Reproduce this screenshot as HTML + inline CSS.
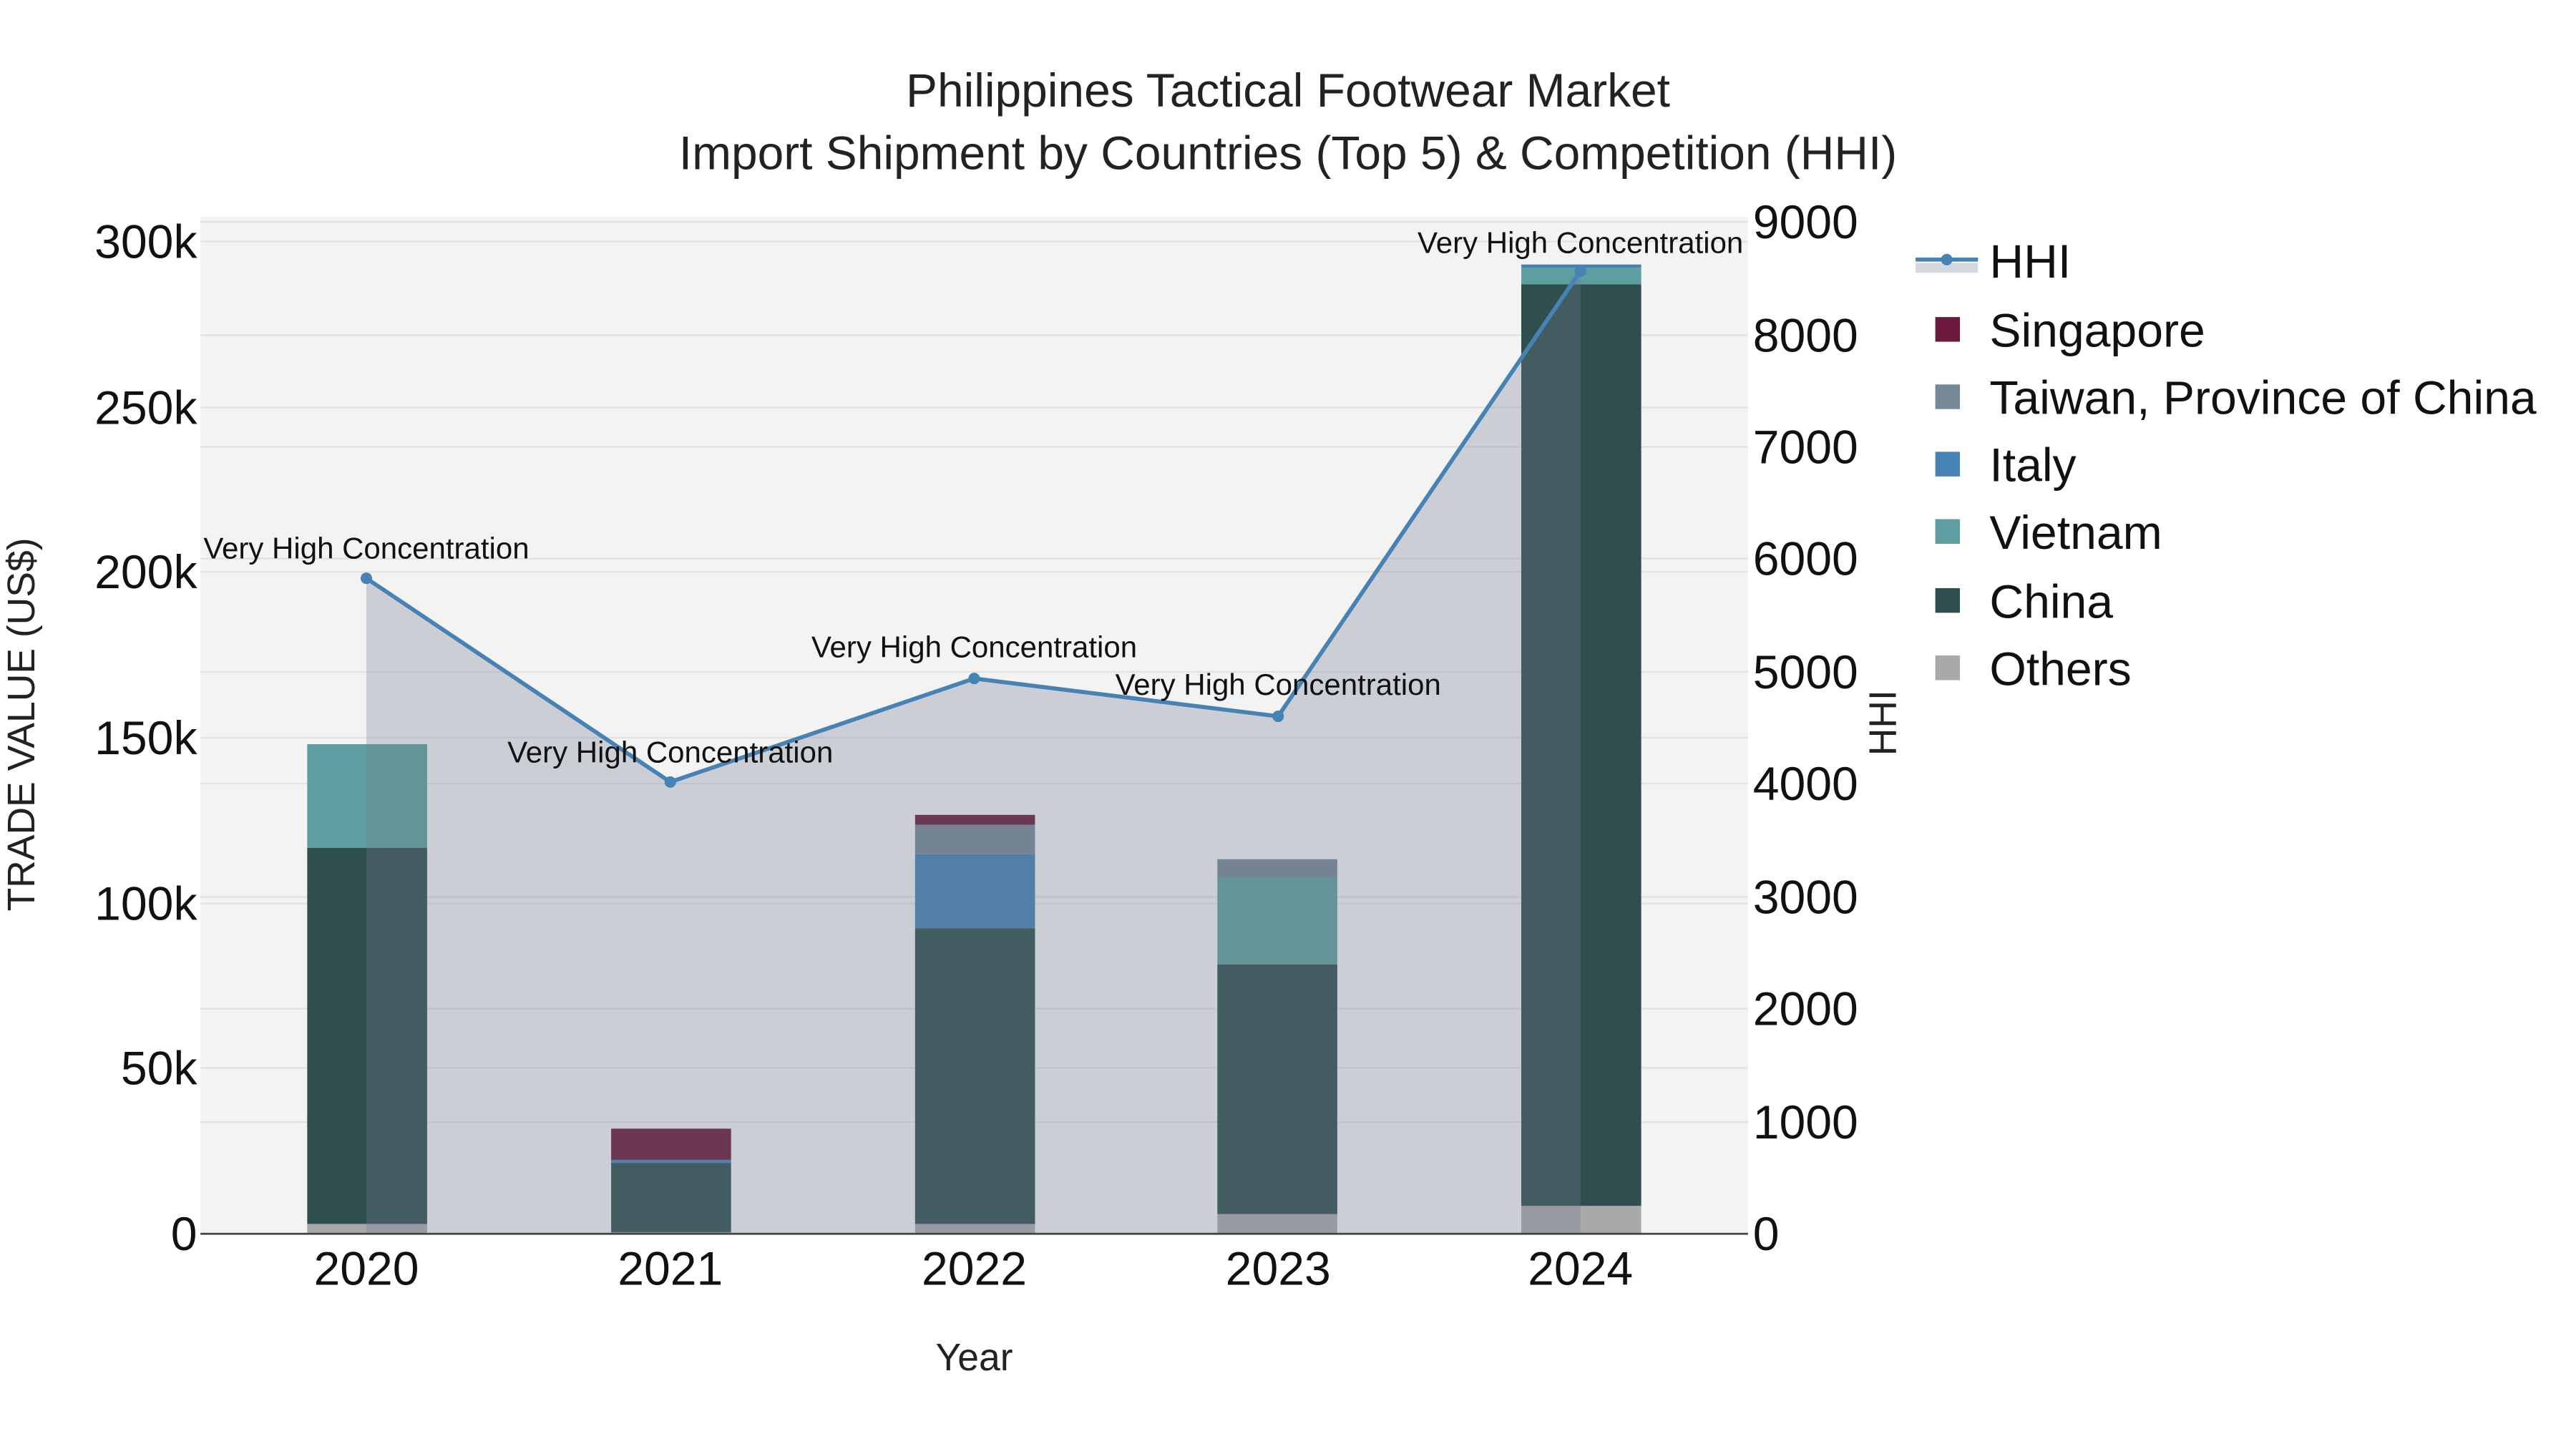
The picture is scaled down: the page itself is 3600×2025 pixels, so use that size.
<!DOCTYPE html>
<html><head><meta charset="utf-8"><style>
html,body{margin:0;padding:0;background:#fff;}
svg{display:block;font-family:"Liberation Sans",sans-serif;}
</style></head><body>
<svg width="3600" height="2025" viewBox="0 0 1568 882" xmlns="http://www.w3.org/2000/svg">
<rect width="1568" height="882" fill="#fff"/>
<rect x="122" y="132" width="942" height="619" fill="#f3f3f3"/>
<g stroke="#e2e2e2" stroke-width="1">
<line x1="122" x2="1064" y1="650" y2="650"/><line x1="122" x2="1064" y1="550" y2="550"/>
<line x1="122" x2="1064" y1="449" y2="449"/><line x1="122" x2="1064" y1="348" y2="348"/>
<line x1="122" x2="1064" y1="248" y2="248"/><line x1="122" x2="1064" y1="147" y2="147"/>
<line x1="122" x2="1064" y1="683" y2="683"/><line x1="122" x2="1064" y1="614" y2="614"/>
<line x1="122" x2="1064" y1="546" y2="546"/><line x1="122" x2="1064" y1="477" y2="477"/>
<line x1="122" x2="1064" y1="409" y2="409"/><line x1="122" x2="1064" y1="340" y2="340"/>
<line x1="122" x2="1064" y1="272" y2="272"/><line x1="122" x2="1064" y1="204" y2="204"/>
<line x1="122" x2="1064" y1="135" y2="135"/>
</g>
<g>
<rect x="187" y="745" width="73" height="6" fill="#a9a9a9"/>
<rect x="187" y="516" width="73" height="229" fill="#2f4f4f"/>
<rect x="187" y="453" width="73" height="63" fill="#5f9ea0"/>

<rect x="372" y="750" width="73" height="1" fill="#a9a9a9"/>
<rect x="372" y="708" width="73" height="42" fill="#2f4f4f"/>
<rect x="372" y="706" width="73" height="2" fill="#4682b4"/>
<rect x="372" y="687" width="73" height="19" fill="#6b1a3d"/>

<rect x="557" y="745" width="73" height="6" fill="#a9a9a9"/>
<rect x="557" y="565" width="73" height="180" fill="#2f4f4f"/>
<rect x="557" y="520" width="73" height="45" fill="#4682b4"/>
<rect x="557" y="502" width="73" height="18" fill="#778899"/>
<rect x="557" y="496" width="73" height="6" fill="#6b1a3d"/>

<rect x="741" y="739" width="73" height="12" fill="#a9a9a9"/>
<rect x="741" y="587" width="73" height="152" fill="#2f4f4f"/>
<rect x="741" y="534" width="73" height="53" fill="#5f9ea0"/>
<rect x="741" y="523" width="73" height="11" fill="#778899"/>

<rect x="926" y="734" width="73" height="17" fill="#a9a9a9"/>
<rect x="926" y="173" width="73" height="561" fill="#2f4f4f"/>
<rect x="926" y="163" width="73" height="10" fill="#5f9ea0"/>
<rect x="926" y="161" width="73" height="2" fill="#4682b4"/>
</g>
<polygon points="223,751 223,352 408,476 593,413 778,436 962,165 962,751" fill="rgba(112,122,142,0.3)"/>
<polyline points="223,352 408,476 593,413 778,436 962,165" fill="none" stroke="#4682b4" stroke-width="2.5"/>
<g fill="#4682b4"><circle cx="223" cy="352" r="3.5"/><circle cx="408" cy="476" r="3.5"/><circle cx="593" cy="413" r="3.5"/><circle cx="778" cy="436" r="3.5"/><circle cx="962" cy="165" r="3.5"/></g>
<line x1="122" x2="1064" y1="751" y2="751" stroke="#444" stroke-width="1.2"/>
<g font-size="18.3" text-anchor="middle" fill="#111">
<text x="223" y="340">Very High Concentration</text>
<text x="408" y="464">Very High Concentration</text>
<text x="593" y="400">Very High Concentration</text>
<text x="778" y="423">Very High Concentration</text>
<text x="962" y="154">Very High Concentration</text>
</g>
<g font-size="28.7" text-anchor="middle" fill="#222">
<text x="784" y="65">Philippines Tactical Footwear Market</text>
<text x="784" y="103">Import Shipment by Countries (Top 5) &amp; Competition (HHI)</text>
</g>
<g font-size="28.8" fill="#111" text-anchor="end">
<text x="120" y="761">0</text><text x="120" y="660">50k</text><text x="120" y="560">100k</text>
<text x="120" y="459">150k</text><text x="120" y="358">200k</text><text x="120" y="258">250k</text><text x="120" y="157">300k</text>
</g>
<g font-size="28.8" fill="#111">
<text x="1067" y="761">0</text><text x="1067" y="693">1000</text><text x="1067" y="624">2000</text>
<text x="1067" y="556">3000</text><text x="1067" y="487">4000</text><text x="1067" y="419">5000</text>
<text x="1067" y="350">6000</text><text x="1067" y="282">7000</text><text x="1067" y="214">8000</text><text x="1067" y="145">9000</text>
</g>
<g font-size="28.8" fill="#111" text-anchor="middle">
<text x="223" y="782">2020</text><text x="408" y="782">2021</text><text x="593" y="782">2022</text>
<text x="778" y="782">2023</text><text x="962" y="782">2024</text>
</g>
<text x="593" y="834" font-size="23.3" text-anchor="middle" fill="#222">Year</text>
<text transform="translate(21,441) rotate(-90)" font-size="23.3" text-anchor="middle" fill="#222">TRADE VALUE (US$)</text>
<text transform="translate(1154,440) rotate(-90)" font-size="23.3" text-anchor="middle" fill="#222">HHI</text>
<rect x="1166" y="160" width="38" height="6" fill="rgba(112,122,142,0.3)"/>
<line x1="1166" x2="1204" y1="158" y2="158" stroke="#4682b4" stroke-width="2.5"/>
<circle cx="1185" cy="158" r="3.5" fill="#4682b4"/>
<rect x="1178" y="193" width="15" height="15" fill="#6b1a3d"/>
<rect x="1178" y="234" width="15" height="15" fill="#778899"/>
<rect x="1178" y="275" width="15" height="15" fill="#4682b4"/>
<rect x="1178" y="316" width="15" height="15" fill="#5f9ea0"/>
<rect x="1178" y="358" width="15" height="15" fill="#2f4f4f"/>
<rect x="1178" y="399" width="15" height="15" fill="#a9a9a9"/>
<g font-size="28.8" fill="#111">
<text x="1211" y="169">HHI</text><text x="1211" y="211">Singapore</text>
<text x="1211" y="252">Taiwan, Province of China</text><text x="1211" y="293">Italy</text>
<text x="1211" y="334">Vietnam</text><text x="1211" y="376">China</text><text x="1211" y="417">Others</text>
</g>
</svg>
</body></html>
